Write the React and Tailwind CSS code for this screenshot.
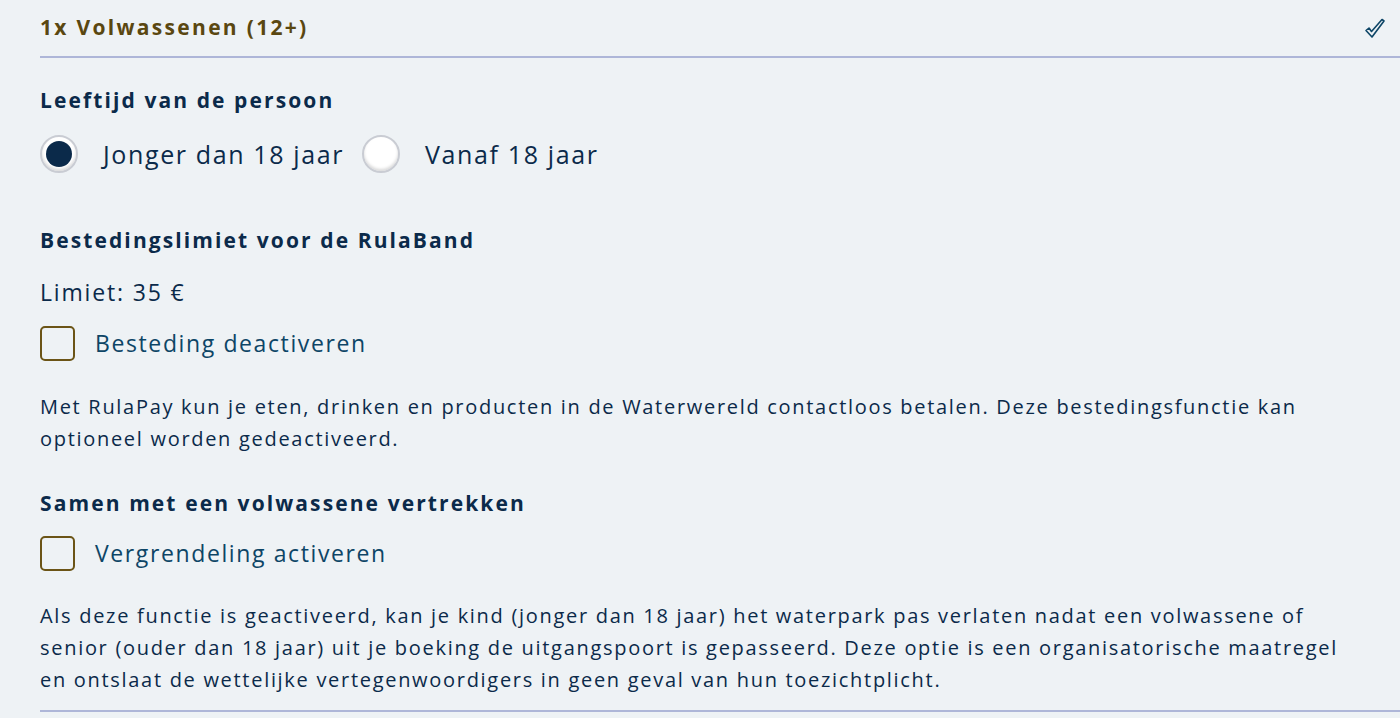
import React, { useState } from "react";

const FONT = { fontFamily: "'Open Sans', sans-serif" };

const Radio = ({ checked, label, onClick }) => (
  <button type="button" onClick={onClick} className="flex items-center gap-[25px]">
    <span className="flex h-[38px] w-[38px] items-center justify-center rounded-full border-2 border-[#c9ccd3] bg-white shadow-[inset_0_-2px_3px_rgba(0,0,0,0.15)]">
      {checked && <span className="h-[26px] w-[26px] rounded-full bg-[#0b2a4a]" />}
    </span>
    <span className="text-[25px] leading-[38px] tracking-[0.065em] text-[#0b2a4a]">{label}</span>
  </button>
);

const Checkbox = ({ checked, label, onClick }) => (
  <button type="button" onClick={onClick} className="flex items-center gap-[20px]">
    <span className="h-[35px] w-[35px] rounded-[5px] border-2 border-[#6b5416] bg-transparent" />
    <span className="text-[23px] leading-[35px] tracking-[0.07em] text-[#0d4566]">{label}</span>
  </button>
);

export default function App() {
  const [age, setAge] = useState("young");
  const [spend, setSpend] = useState(false);
  const [lock, setLock] = useState(false);

  return (
    <div className="min-h-[718px] w-[1400px] bg-[#eef2f5] pl-[40px] text-[#0b2a4a]" style={FONT}>
      <div className="flex h-[58px] items-center justify-between border-b-2 border-[#aeb6d8] pr-[14px]">
        <h1 className="text-[21px] font-bold tracking-[0.11em] text-[#5a4710]">1x Volwassenen (12+)</h1>
        <svg width="22" height="22" viewBox="0 0 22 22" fill="none" stroke="#0d4566" strokeWidth="1.6" strokeLinejoin="round">
          <path d="M2 13.5l3-2.5 2.5 3.5L18 2.5l2 1.5L8 20z" />
        </svg>
      </div>

      <div className="pr-[40px]">
        <h2 className="mt-[27px] text-[21px] font-bold leading-[30px] tracking-[0.1em]">Leeftijd van de persoon</h2>
        <div className="mt-[20px] flex items-center gap-[18px]">
          <Radio checked={age === "young"} label="Jonger dan 18 jaar" onClick={() => setAge("young")} />
          <Radio checked={age === "adult"} label="Vanaf 18 jaar" onClick={() => setAge("adult")} />
        </div>

        <h2 className="mt-[52px] text-[21px] font-bold leading-[30px] tracking-[0.1em]">Bestedingslimiet voor de RulaBand</h2>
        <p className="mt-[22px] text-[23px] leading-[30px] tracking-[0.08em]">Limiet: 35 €</p>
        <div className="mt-[19px]">
          <Checkbox checked={spend} label="Besteding deactiveren" onClick={() => setSpend(!spend)} />
        </div>
        <p className="mt-[30px] text-[20px] leading-[32px] tracking-[0.085em]">
          Met RulaPay kun je eten, drinken en producten in de Waterwereld contactloos betalen. Deze bestedingsfunctie kan optioneel worden gedeactiveerd.
        </p>

        <h2 className="mt-[33px] text-[21px] font-bold leading-[30px] tracking-[0.1em]">Samen met een volwassene vertrekken</h2>
        <div className="mt-[18px]">
          <Checkbox checked={lock} label="Vergrendeling activeren" onClick={() => setLock(!lock)} />
        </div>
        <p className="mt-[29px] text-[20px] leading-[32px] tracking-[0.085em]">
          Als deze functie is geactiveerd, kan je kind (jonger dan 18 jaar) het waterpark pas verlaten nadat een volwassene of senior (ouder dan 18 jaar) uit je boeking de uitgangspoort is gepasseerd. Deze optie is een organisatorische maatregel en ontslaat de wettelijke vertegenwoordigers in geen geval van hun toezichtplicht.
        </p>
      </div>
      <div className="mt-[14px] border-b-2 border-[#aeb6d8]" />
    </div>
  );
}
